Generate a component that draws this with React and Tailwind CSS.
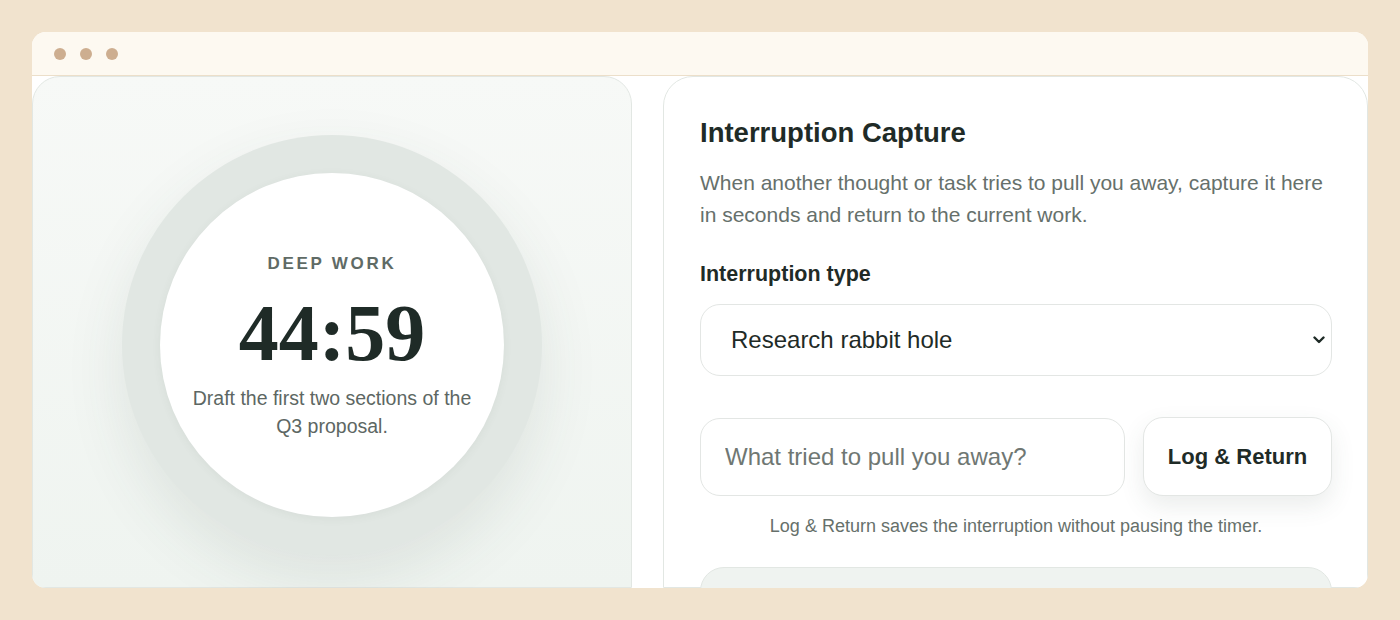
import { useState } from "react";

const sans = { fontFamily: '"Liberation Sans", Arial, sans-serif' };

const TimerPanel = () => (
  <div className="w-[600px] shrink-0 rounded-t-[28px] border border-[#e2e7e3] bg-gradient-to-b from-[#f7f9f7] to-[#eff4f0] pt-[58px] flex justify-center">
    <div className="w-[420px] h-[420px] rounded-full bg-[#e1e7e3] shadow-[0_24px_60px_rgba(60,80,70,0.10)] flex items-center justify-center">
      <div className="w-[344px] h-[344px] rounded-full bg-white shadow-[0_2px_10px_rgba(60,80,70,0.06)] flex flex-col items-center justify-center text-center pt-[3px]">
        <div className="text-[17px] leading-[20px] font-bold tracking-[0.16em] text-[#5f6b66] mb-[19px]">DEEP WORK</div>
        <div
          className="text-[80px] leading-none font-bold text-[#1f2b27]"
          style={{ fontFamily: '"Liberation Serif", "Times New Roman", serif' }}
        >
          44:59
        </div>
        <p className="mt-[11px] max-w-[290px] text-[19.5px] leading-[28px] text-[#5d6763]">
          Draft the first two sections of the Q3 proposal.
        </p>
      </div>
    </div>
  </div>
);

const CapturePanel = () => {
  const [kind, setKind] = useState("rabbit");
  const [note, setNote] = useState("");

  return (
    <div className="flex-1 rounded-t-[30px] border border-[#e2e7e3] bg-white pt-10 pl-[36px] pr-[35px]">
      <h2 className="text-[27.5px] leading-[32px] font-bold text-[#1f2b27]">Interruption Capture</h2>
      <p className="mt-[18px] text-[21px] leading-[32px] text-[#66706b]">
        When another thought or task tries to pull you away, capture it here in seconds and return to the current work.
      </p>

      <label className="block mt-[30px] text-[21.5px] leading-[26px] font-bold text-[#1f2b27]">Interruption type</label>
      <div className="relative mt-[17px]">
        <select
          value={kind}
          onChange={(e) => setKind(e.target.value)}
          className="w-full h-[72px] appearance-none rounded-[20px] border border-[#e3e6e4] bg-white pl-[30px] pr-10 text-[24px] text-[#1f2b27] outline-none"
          style={sans}
        >
          <option value="rabbit">Research rabbit hole</option>
          <option value="message">Message or email</option>
          <option value="idea">New idea</option>
          <option value="errand">Personal errand</option>
        </select>
        <svg
          className="absolute right-[7px] top-1/2 -translate-y-1/2 pointer-events-none"
          width="12"
          height="8"
          viewBox="0 0 12 8"
          fill="none"
        >
          <path d="M1.5 1.5l4.5 4.5 4.5-4.5" stroke="#1f2b27" strokeWidth="2.4" strokeLinecap="round" strokeLinejoin="round" />
        </svg>
      </div>

      <div className="mt-[41px] flex items-center gap-[18px]">
        <input
          value={note}
          onChange={(e) => setNote(e.target.value)}
          placeholder="What tried to pull you away?"
          className="flex-1 h-[78px] rounded-[20px] border border-[#e3e6e4] bg-white pl-[24px] text-[24px] text-[#1f2b27] placeholder-[#6f7773] outline-none"
          style={sans}
        />
        <button
          className="w-[189px] h-[79px] rounded-[20px] border border-[#e3e6e4] bg-white text-[22px] font-bold text-[#1f2b27] shadow-[0_10px_24px_rgba(60,80,70,0.10)]"
          style={sans}
        >
          Log &amp; Return
        </button>
      </div>
      <p className="mt-[18px] text-center text-[18px] leading-[24px] text-[#66706b]">
        Log &amp; Return saves the interruption without pausing the timer.
      </p>

      <div className="mt-[29px] h-[80px] rounded-[24px] border border-[#e2e7e3] bg-[#eff3f0]" />
    </div>
  );
};

export default function App() {
  return (
    <div className="h-[620px] bg-[#f1e3ce] p-8" style={sans}>
      <div className="h-[556px] rounded-[14px] bg-white overflow-hidden flex flex-col">
        <div className="h-[44px] shrink-0 bg-[#fdf9f1] border-b border-[#ecdfca] flex items-center gap-[14px] pl-[22px]">
          <span className="w-3 h-3 rounded-full bg-[#cdae90]" />
          <span className="w-3 h-3 rounded-full bg-[#cdae90]" />
          <span className="w-3 h-3 rounded-full bg-[#cdae90]" />
        </div>
        <div className="flex-1 flex gap-[31px] min-h-0">
          <TimerPanel />
          <CapturePanel />
        </div>
      </div>
    </div>
  );
}
